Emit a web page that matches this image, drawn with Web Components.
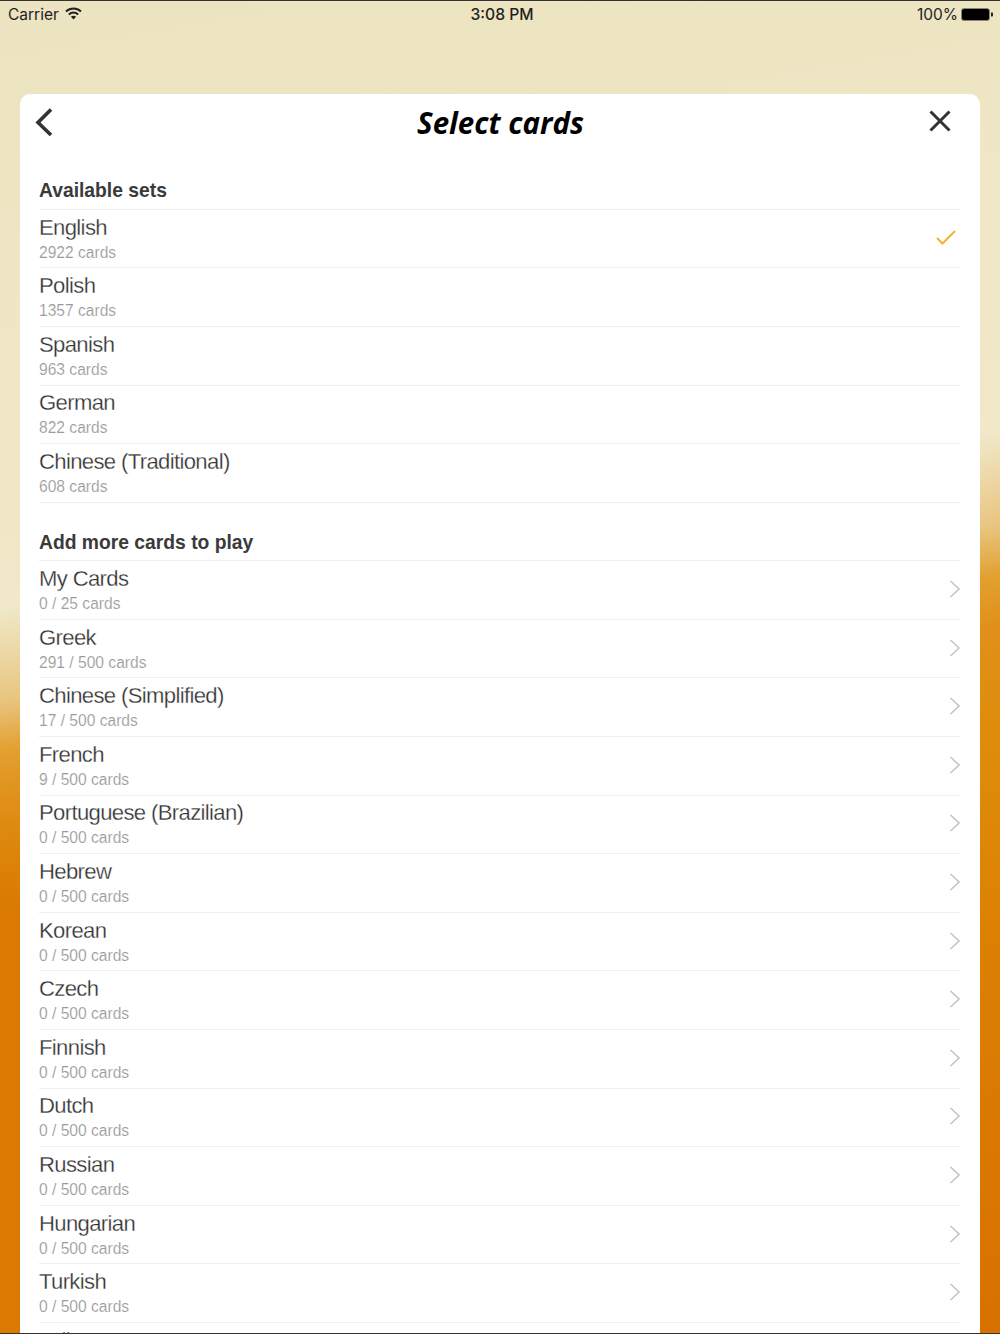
<!DOCTYPE html>
<html>
<head>
<meta charset="utf-8">
<title>Select cards</title>
<style>
  html, body { margin: 0; height: 100%; }
  body {
    width: 1000px;
    height: 1334px;
    overflow: hidden;
    background: #ede5c0;
  }
</style>
</head>
<body>
<app-screen>
  <status-bar></status-bar>
  <cards-sheet>
    <sheet-header title="Select cards"></sheet-header>
    <set-section heading="Available sets">
      <card-row name="English" count="2922 cards" mark="check"></card-row>
      <card-row name="Polish" count="1357 cards"></card-row>
      <card-row name="Spanish" count="963 cards"></card-row>
      <card-row name="German" count="822 cards"></card-row>
      <card-row name="Chinese (Traditional)" count="608 cards"></card-row>
    </set-section>
    <set-section heading="Add more cards to play">
      <card-row name="My Cards" count="0 / 25 cards" mark="chevron"></card-row>
      <card-row name="Greek" count="291 / 500 cards" mark="chevron"></card-row>
      <card-row name="Chinese (Simplified)" count="17 / 500 cards" mark="chevron"></card-row>
      <card-row name="French" count="9 / 500 cards" mark="chevron"></card-row>
      <card-row name="Portuguese (Brazilian)" count="0 / 500 cards" mark="chevron"></card-row>
      <card-row name="Hebrew" count="0 / 500 cards" mark="chevron"></card-row>
      <card-row name="Korean" count="0 / 500 cards" mark="chevron"></card-row>
      <card-row name="Czech" count="0 / 500 cards" mark="chevron"></card-row>
      <card-row name="Finnish" count="0 / 500 cards" mark="chevron"></card-row>
      <card-row name="Dutch" count="0 / 500 cards" mark="chevron"></card-row>
      <card-row name="Russian" count="0 / 500 cards" mark="chevron"></card-row>
      <card-row name="Hungarian" count="0 / 500 cards" mark="chevron"></card-row>
      <card-row name="Turkish" count="0 / 500 cards" mark="chevron"></card-row>
      <card-row name="Italian" count="0 / 500 cards" mark="chevron"></card-row>
    </set-section>
  </cards-sheet>
</app-screen>
<script>
class AppScreen extends HTMLElement {
  connectedCallback() {
    this.attachShadow({ mode: 'open' });
    this.shadowRoot.innerHTML = `
      <style>
        :host {
          display: flex;
          flex-direction: column;
          width: 1000px;
          height: 1334px;
          overflow: hidden;
          box-sizing: border-box;
          position: relative;
          background:
            linear-gradient(180deg, rgba(218,122,0,0), #da7a00 110px) 0 800px / 20px 534px no-repeat,
            linear-gradient(170deg, #ece4c0 0, #f0e8c8 600px, #e9c580 690px, #e2a030 740px, #e0901a 790px, #df8c0a 900px, #dc8004 1100px, #d87000 1487px);
        }
        :host::before, :host::after {
          content: '';
          position: absolute;
          left: 0;
          right: 0;
          height: 1px;
          background: #333;
          z-index: 5;
        }
        :host::before { top: 0; }
        :host::after { bottom: 0; }
      </style>
      <slot></slot>
    `;
  }
}

class StatusBar extends HTMLElement {
  connectedCallback() {
    this.attachShadow({ mode: 'open' });
    this.shadowRoot.innerHTML = `
      <style>
        :host {
          display: grid;
          grid-template-columns: 1fr auto 1fr;
          align-items: center;
          height: 28px;
          padding: 1px 6px 0 8px;
          box-sizing: border-box;
          flex: none;
          font: 400 15.500px/27px "Inter", "Liberation Sans", sans-serif;
          color: #222;
        }
        .left, .right { display: flex; align-items: center; }
        .left { gap: 6px; }
        .right { justify-content: flex-end; gap: 3px; }
        .time { font-weight: 500; font-size: 15.700px; margin-left: 2px; }
        .wifi { margin-top: -3px; }
      </style>
      <div class="left">
        <span>Carrier</span>
        <svg class="wifi" width="17" height="13" viewBox="0 0 17 13">
          <path d="M1 4.600C5.400.6 11.600.6 16 4.600" fill="none" stroke="#222" stroke-width="2"/>
          <path d="M3.800 7.400c2.800-2.400 6.600-2.400 9.400 0" fill="none" stroke="#222" stroke-width="2"/>
          <path d="M8.500 12.400 5.900 9.800c1.500-1.300 3.700-1.300 5.200 0z" fill="#222"/>
        </svg>
      </div>
      <span class="time">3:08 PM</span>
      <div class="right">
        <span>100%</span>
        <svg width="33" height="13" viewBox="0 0 33 13">
          <rect x=".5" y=".5" width="28" height="12" rx="2.500" fill="#000" stroke="#8a8672"/>
          <path d="M30 4.500h1c.6 0 1 .5 1 1v2c0 .5-.4 1-1 1h-1z" fill="#222"/>
        </svg>
      </div>
    `;
  }
}

class CardsSheet extends HTMLElement {
  connectedCallback() {
    this.attachShadow({ mode: 'open' });
    this.shadowRoot.innerHTML = `
      <style>
        :host {
          display: block;
          flex: 1;
          margin: 66px 20px 0;
          padding: 0 20px 0 19px;
          background: #fff;
          border-radius: 10px 10px 0 0;
          overflow: hidden;
          min-height: 0;
        }
      </style>
      <slot></slot>
    `;
  }
}

class SheetHeader extends HTMLElement {
  connectedCallback() {
    const title = this.getAttribute('title');
    this.removeAttribute('title');
    this.attachShadow({ mode: 'open' });
    this.shadowRoot.innerHTML = `
      <style>
        :host {
          display: grid;
          grid-template-columns: 40px 1fr 40px;
          align-items: center;
          height: 57.300px;
        }
        h1 {
          margin: 0;
          text-align: center;
          font: italic 700 29.500px/57px "Open Sans", sans-serif;
          color: #000;
          height: 57px;
          padding-left: 2px;
        }
        svg { display: block; }
        .close { justify-self: end; margin-right: 8px; margin-top: -3px; }
        .back { margin-left: -5px; margin-top: -2px; }
      </style>
      <svg class="back" width="20" height="30" viewBox="0 0 20 30">
        <path d="M17 2.500 4 15.500 17 28" fill="none" stroke="#333" stroke-width="3.600"/>
      </svg>
      <h1>${title}</h1>
      <svg class="close" width="24" height="24" viewBox="0 0 24 24">
        <path d="M2.500 2.500 21.500 21.500M21.500 2.500 2.500 21.500" fill="none" stroke="#333" stroke-width="3"/>
      </svg>
    `;
  }
}

class SetSection extends HTMLElement {
  connectedCallback() {
    this.attachShadow({ mode: 'open' });
    this.shadowRoot.innerHTML = `
      <style>
        :host { display: block; }
        h2 {
          margin: 0;
          height: 58.500px;
          box-sizing: border-box;
          padding-top: 28px;
          font: 700 19.300px/24px "Liberation Sans", sans-serif;
          color: #3a3a3a;
          border-bottom: 1px solid #eeeeee;
        }
      </style>
      <h2>${this.getAttribute('heading')}</h2>
      <slot></slot>
    `;
  }
}

const MARKS = {
  check: `<svg width="20" height="15" viewBox="0 0 20 15"><path d="M1 8 6.500 13.500 19 1" fill="none" stroke="#f0b432" stroke-width="2"/></svg>`,
  chevron: `<svg width="12" height="18" viewBox="0 0 12 18"><path d="M1.500 1 10 9 1.500 17" fill="none" stroke="#c4c4c4" stroke-width="1.600"/></svg>`
};

class CardRow extends HTMLElement {
  connectedCallback() {
    const mark = this.getAttribute('mark');
    this.attachShadow({ mode: 'open' });
    this.shadowRoot.innerHTML = `
      <style>
        :host {
          display: flex;
          align-items: center;
          justify-content: space-between;
          height: 58.600px;
          box-sizing: border-box;
          border-bottom: 1px solid #eeeeee;
        }
        .text { margin-top: -2px; }
        .name {
          font: 400 22.100px/27px "Liberation Sans", sans-serif;
          letter-spacing: -0.650px;
          color: #303030;
          -webkit-text-stroke: 0.28px #fff;
          padding-top: 1px;
        }
        .count {
          font: 400 15.600px/20px "Liberation Sans", sans-serif;
          color: #9a9a9a;
          -webkit-text-stroke: 0.15px #fff;
          margin-top: 2px;
        }
        .mark { display: flex; padding-right: 4px; margin-top: -2px; }
        .mark.chevron { padding-right: 0; margin-right: -1px; }
        svg { display: block; }
      </style>
      <div class="text">
        <div class="name">${this.getAttribute('name')}</div>
        <div class="count">${this.getAttribute('count')}</div>
      </div>
      <div class="mark ${mark || ''}">${MARKS[mark] || ''}</div>
    `;
  }
}

customElements.define('app-screen', AppScreen);
customElements.define('status-bar', StatusBar);
customElements.define('cards-sheet', CardsSheet);
customElements.define('sheet-header', SheetHeader);
customElements.define('set-section', SetSection);
customElements.define('card-row', CardRow);
</script>
</body>
</html>
